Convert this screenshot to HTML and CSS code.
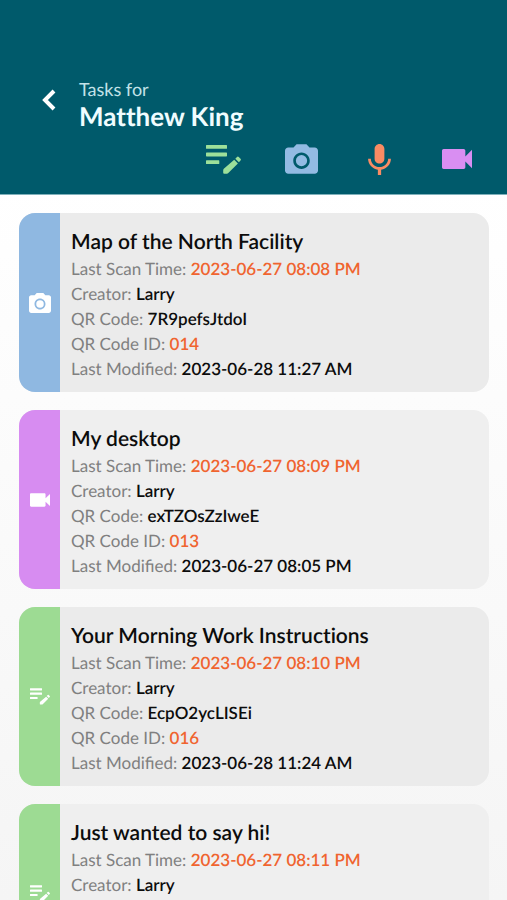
FILE: index.html
```html
<!DOCTYPE html>
<html lang="en">
<head>
<meta charset="utf-8">
<meta name="viewport" content="width=device-width, initial-scale=1">
<title>Tasks for Matthew King</title>
<link rel="stylesheet" href="styles.css">
</head>
<body>
<svg class="defs" aria-hidden="true">
  <symbol id="note" viewBox="0 0 35 29">
    <path d="M.6 0h19.8q.6 0 .6.6v2.6q0 .6-.6.6H.6Q0 3.800 0 3.200V.6Q0 0 .6 0zM.6 7.600h19.800q.6 0 .6.6v2.600q0 .6-.6.6H.6q-.6 0-.6-.6V8.200q0-.6.6-.6zM.6 15.200h12.100q.6 0 .6.6v2.600q0 .6-.6.6H.6q-.6 0-.6-.6v-2.600q0-.6.6-.6z"/>
    <path d="M28.200 14.800l3.700 3.700-9.600 9.600q-.6.6-1.400.6h-2.700q-1 0-1-1v-2.500q0-.8.600-1.400zM29.300 13.700l1.700-1.700q.9-.9 1.800 0l1.700 1.700q.9.900 0 1.800l-1.600 1.700z"/>
  </symbol>
  <symbol id="camera" viewBox="2 2 20 18">
    <path fill-rule="evenodd" d="M9 2L7.170 4H4c-1.100 0-2 .9-2 2v12c0 1.100.9 2 2 2h16c1.100 0 2-.9 2-2V6c0-1.100-.9-2-2-2h-3.170L15 2H9zm3 15c-2.760 0-5-2.240-5-5s2.240-5 5-5 5 2.240 5 5-2.240 5-5 5z"/>
    <circle cx="12" cy="12" r="3.400"/>
  </symbol>
  <symbol id="mic" viewBox="5 2 14 19">
    <path d="M12 14c1.660 0 2.990-1.340 2.990-3L15 5c0-1.660-1.340-3-3-3S9 3.340 9 5v6c0 1.660 1.340 3 3 3zm5.300-3c0 3-2.540 5.100-5.300 5.100S6.700 14 6.700 11H5c0 3.410 2.720 6.230 6 6.720V21h2v-3.280c3.280-.48 6-3.300 6-6.720h-1.700z"/>
  </symbol>
  <symbol id="video" viewBox="3 6 18 12">
    <path d="M17 10.500V7c0-.55-.45-1-1-1H4c-.55 0-1 .45-1 1v10c0 .55.450 1 1 1h12c.55 0 1-.45 1-1v-3.500l4 4v-11l-4 4z"/>
  </symbol>
</svg>
<div class="app">
  <header class="header">
    <div class="heading">
      <button class="back" type="button" aria-label="Back">
        <svg viewBox="0 0 14 22"><path d="M12 2L3 11l9 9"/></svg>
      </button>
      <h1 class="title"><span class="title-label">Tasks for</span> <span class="title-name">Matthew King</span></h1>
    </div>
    <nav class="tools" aria-label="Add task">
      <button class="tool tool-note" type="button" aria-label="Note"><svg><use href="#note"/></svg></button>
      <button class="tool tool-camera" type="button" aria-label="Photo"><svg><use href="#camera"/></svg></button>
      <button class="tool tool-mic" type="button" aria-label="Audio"><svg><use href="#mic"/></svg></button>
      <button class="tool tool-video" type="button" aria-label="Video"><svg><use href="#video"/></svg></button>
    </nav>
  </header>
  <main class="tasks">
    <article class="card card-camera">
      <div class="stripe"><svg><use href="#camera"/></svg></div>
      <div class="details">
        <h2>Map of the North Facility</h2>
        <p>Last Scan Time: <b class="accent">2023-06-27 08:08 PM</b></p>
        <p>Creator: <b>Larry</b></p>
        <p>QR Code: <b>7R9pefsJtdoI</b></p>
        <p>QR Code ID: <b class="accent">014</b></p>
        <p>Last Modified: <b>2023-06-28 11:27 AM</b></p>
      </div>
    </article>
    <article class="card card-video">
      <div class="stripe"><svg><use href="#video"/></svg></div>
      <div class="details">
        <h2>My desktop</h2>
        <p>Last Scan Time: <b class="accent">2023-06-27 08:09 PM</b></p>
        <p>Creator: <b>Larry</b></p>
        <p>QR Code: <b>exTZOsZzIweE</b></p>
        <p>QR Code ID: <b class="accent">013</b></p>
        <p>Last Modified: <b>2023-06-27 08:05 PM</b></p>
      </div>
    </article>
    <article class="card card-note">
      <div class="stripe"><svg><use href="#note"/></svg></div>
      <div class="details">
        <h2>Your Morning Work Instructions</h2>
        <p>Last Scan Time: <b class="accent">2023-06-27 08:10 PM</b></p>
        <p>Creator: <b>Larry</b></p>
        <p>QR Code: <b>EcpO2ycLISEi</b></p>
        <p>QR Code ID: <b class="accent">016</b></p>
        <p>Last Modified: <b>2023-06-28 11:24 AM</b></p>
      </div>
    </article>
    <article class="card card-note">
      <div class="stripe"><svg><use href="#note"/></svg></div>
      <div class="details">
        <h2>Just wanted to say hi!</h2>
        <p>Last Scan Time: <b class="accent">2023-06-27 08:11 PM</b></p>
        <p>Creator: <b>Larry</b></p>
      </div>
    </article>
  </main>
</div>
</body>
</html>
```
FILE: styles.css
```css
* { box-sizing: border-box; }

body {
  margin: 0;
  font-family: Lato, "Liberation Sans", sans-serif;
  text-rendering: geometricPrecision;
  color: #0c0c0c;
}

.defs { display: none; }

.app {
  display: flex;
  flex-direction: column;
  height: 100vh;
  background: linear-gradient(#fff 20%, #f5f5f5);
}

.header {
  flex: none;
  padding: 77px 11px 9px 34px;
  background: #005a6b;
  border-bottom: 1px solid #7fb0ba;
}

.heading {
  display: flex;
  align-items: flex-start;
  gap: 15px;
}

button {
  display: flex;
  align-items: center;
  justify-content: center;
  padding: 0;
  border: 0;
  background: none;
  cursor: pointer;
}

.back {
  width: 30px;
  height: 46px;
}

.back svg {
  width: 14px;
  height: 22px;
  fill: none;
  stroke: #fff;
  stroke-width: 4;
}

.title {
  margin: 0;
  font-weight: 400;
}

.title-label,
.title-name { display: block; }

.title-label {
  font-size: 18px;
  line-height: 24px;
  color: #c3e2e8;
}

.title-name {
  font-size: 26px;
  line-height: 30px;
  font-weight: 700;
  font-variant-ligatures: none;
  color: #f0fdff;
}

.tools {
  display: flex;
  justify-content: flex-end;
  margin-top: 2px;
}

.tool {
  width: 78px;
  height: 52px;
}

.tool svg { fill: currentColor; }

.tool-note { color: #9de09a; }
.tool-note svg { width: 35px; height: 29px; }
.tool-camera { color: #93bbe3; }
.tool-camera svg { width: 33px; height: 30px; }
.tool-mic { color: #f98b63; }
.tool-mic svg { width: 23px; height: 31px; }
.tool-video { color: #d98ef2; }
.tool-video svg { width: 30px; height: 20px; }

.tasks {
  flex: 1;
  min-height: 0;
  display: flex;
  flex-direction: column;
  gap: 18px;
  padding: 18px;
  padding-left: 19px;
  overflow-y: auto;
  scrollbar-width: none;
}

.card {
  flex: none;
  display: flex;
  min-height: 179px;
  border-radius: 16px;
  overflow: hidden;
  background: #ebebeb;
}

.card:nth-child(even) { background: #efefef; }

.stripe {
  flex: none;
  display: flex;
  align-items: center;
  justify-content: center;
  width: 41px;
}

.stripe svg { fill: #fff; }

.card-camera .stripe { background: #8fb8e1; }
.card-camera svg { width: 22px; height: 20px; }
.card-video .stripe { background: #d78cf1; }
.card-video svg { width: 20px; height: 14px; }
.card-note .stripe { background: #9ddb93; }
.card-note svg { width: 20px; height: 17px; }

.details {
  padding: 14px 11px 11px;
}

.details h2 {
  margin: 0;
  font-size: 21px;
  line-height: 29px;
  font-weight: 600;
  font-variant-ligatures: none;
}

.details p {
  margin: 0;
  font-size: 17px;
  line-height: 25px;
  color: #808080;
}

.details b {
  font-weight: 600;
  color: #0c0c0c;
}

.details .accent { color: #f0642f; }
```
